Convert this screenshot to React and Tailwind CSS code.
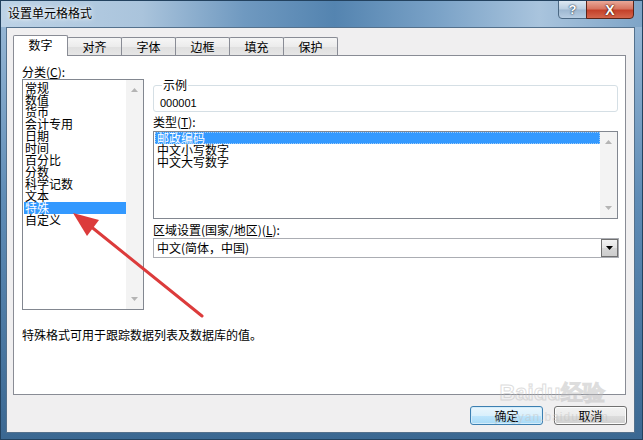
import React from 'react';

const categories = ['常规', '数值', '货币', '会计专用', '日期', '时间', '百分比', '分数', '科学记数', '文本', '特殊', '自定义'];
const types = ['邮政编码', '中文小写数字', '中文大写数字'];
const tabs = ['对齐', '字体', '边框', '填充', '保护'];

const ScrollBar = () => (
  <div className="w-[17px] shrink-0 flex flex-col justify-between items-center bg-[#f3f3f3] py-[8px]">
    <svg width="7" height="4" viewBox="0 0 7 4">
      <path d="M0 4 L3.5 0 L7 4Z" fill="#b4b4b4" />
    </svg>
    <svg width="7" height="4" viewBox="0 0 7 4">
      <path d="M0 0 L3.5 4 L7 0Z" fill="#b4b4b4" />
    </svg>
  </div>
);

export default function App() {
  return (
    <div className="relative w-[643px] h-[440px] overflow-hidden flex flex-col bg-[linear-gradient(180deg,#9dbcd9_0%,#5f8cb6_45%,#3b6892_100%)] border border-[#23425f] font-['Noto_Sans_CJK_SC',sans-serif] text-[12px] text-black">
      {/* Title bar */}
      <div className="h-[26px] shrink-0 flex justify-between bg-[linear-gradient(90deg,#bcd2e6_0%,#aac4dc_22%,#6f99c0_38%,#5484b0_52%,#7aa2c7_68%,#a9c4dd_84%,#7ea4c7_100%)]">
        <span className="pl-[7px] pt-[5px] leading-[14px] [text-shadow:0_0_6px_#ffffff,0_0_3px_#ffffff]">设置单元格格式</span>
        <div className="flex mr-[8px] h-[19px] -mt-px">
          <div className="w-[29px] flex items-center justify-center rounded-bl-[4px] border border-[#4b6883] bg-[linear-gradient(180deg,#dde8f2_0%,#b9cde0_48%,#9db7d0_52%,#b7cde2_100%)]">
            <span className="font-['Liberation_Sans',sans-serif] font-bold text-[13px] leading-none text-white [text-shadow:0_0_1px_#243a52,0_0_2px_#243a52]">?</span>
          </div>
          <div className="w-[48px] -ml-px flex items-center justify-center rounded-br-[4px] border border-[#5a2418] bg-[linear-gradient(180deg,#e9a898_0%,#d77561_45%,#c4412a_55%,#d4664c_100%)]">
            <span className="font-['Liberation_Sans',sans-serif] font-bold text-[14px] leading-none text-white [text-shadow:0_0_1px_#3b0e06,0_0_2px_#3b0e06]">X</span>
          </div>
        </div>
      </div>

      {/* Client area */}
      <div className="flex-1 ml-[5px] mr-[7px] mb-[6px] flex flex-col bg-[#f0eff0] border border-[#54718d] pt-[7px] pl-[6px] pr-[8px]">
        {/* Tabs */}
        <div className="h-[20px] flex items-end">
          <div className="relative z-10 w-[55px] h-[21px] -mb-px flex items-center justify-center bg-white border border-b-0 border-[#898c95] rounded-t-[2px] pb-[2px]">
            数字
          </div>
          {tabs.map((t) => (
            <div
              key={t}
              className="-ml-px w-[55px] h-[18px] flex items-center justify-center border border-b-0 border-[#898c95] rounded-t-[2px] bg-[linear-gradient(180deg,#f6f6f6_0%,#ececec_50%,#dfdfdf_51%,#e6e6e6_100%)]"
            >
              {t}
            </div>
          ))}
        </div>

        {/* Panel */}
        <div className="h-[340px] bg-white border border-[#898c95] flex flex-col pl-[8px] pr-[6px] pt-[10px]">
          <div className="flex gap-[9px]">
            {/* Category */}
            <div className="w-[122px] shrink-0 flex flex-col">
              <div className="h-[12px] leading-[12px]">
                分类(<u>C</u>):
              </div>
              <div className="mt-[1px] h-[231px] border border-[#828790] flex">
                <div className="flex-1 pt-[2px] pl-[1px]">
                  {categories.map((c) => (
                    <div
                      key={c}
                      className={`h-[12px] leading-[12px] pl-[1px] ${c === '特殊' ? 'bg-[#3399ff] text-white' : ''}`}
                    >
                      {c}
                    </div>
                  ))}
                </div>
                <ScrollBar />
              </div>
            </div>

            {/* Right column */}
            <div className="flex-1 flex flex-col">
              <fieldset className="mt-[13px] mr-[1px] border border-[#d5dfe5] rounded-[3px] pl-[6px] pt-[6px] pb-[2px]">
                <legend className="ml-[2px] px-[1px] leading-[12px]">示例</legend>
                <div className="leading-[12px] font-['Liberation_Sans',sans-serif] text-[11px]">000001</div>
              </fieldset>

              <div className="mt-[4px] h-[12px] leading-[12px]">
                类型(<u>T</u>):
              </div>
              <div className="mt-[3px] mr-[1px] h-[88px] border border-[#828790] flex">
                <div className="flex-1 pl-[1px]">
                  {types.map((t, i) => (
                    <div
                      key={t}
                      className={`h-[12px] leading-[12px] pl-[2px] ${i === 0 ? 'bg-[#3399ff] text-white outline outline-dotted outline-[#9ecbf7] -outline-offset-1' : ''}`}
                    >
                      {t}
                    </div>
                  ))}
                </div>
                <ScrollBar />
              </div>

              <div className="mt-[5px] h-[12px] leading-[12px]">
                区域设置(国家/地区)(<u>L</u>):
              </div>
              <div className="mt-[2px] h-[20px] border border-[#abadb3] flex items-center pl-[3px]">
                <span className="flex-1 leading-[12px]">中文(简体，中国)</span>
                <div className="w-[17px] h-[18px] border border-[#707070] flex items-center justify-center bg-[linear-gradient(180deg,#f2f2f2_0%,#e3e3e3_50%,#d6d6d6_51%,#cdcdcd_100%)]">
                  <svg width="7" height="4" viewBox="0 0 7 4">
                    <path d="M0 0 L3.5 4 L7 0Z" fill="#000" />
                  </svg>
                </div>
              </div>
            </div>
          </div>

          <p className="mt-[19px] h-[12px] leading-[12px]">特殊格式可用于跟踪数据列表及数据库的值。</p>
        </div>

        {/* Buttons */}
        <div className="mt-[11px] flex justify-end gap-[11px] -mr-[1px]">
          <button className="w-[73px] h-[19px] rounded-[3px] border border-[#3c7fb1] bg-[linear-gradient(180deg,#eaf6fd_0%,#d9f0fc_50%,#bee6fd_51%,#a7d9f5_100%)] leading-[12px] shadow-[inset_0_0_0_1px_#d4ecfa]">
            确定
          </button>
          <button className="w-[73px] h-[19px] rounded-[3px] border border-[#707070] bg-[linear-gradient(180deg,#f2f2f2_0%,#ebebeb_50%,#dddddd_51%,#cfcfcf_100%)] leading-[12px] shadow-[inset_0_0_0_1px_#fcfcfc]">
            取消
          </button>
        </div>
      </div>

      {/* Baidu watermark */}
      <div className="absolute left-[493px] top-[380px] w-[116px] flex flex-col items-center pointer-events-none opacity-50">
        <span className="font-['Liberation_Sans',sans-serif] text-[22px] leading-[24px] font-bold text-transparent [-webkit-text-stroke:1px_#bdbdbd]">
          Baidu经验
        </span>
        <span className="mt-[6px] font-['Liberation_Sans',sans-serif] text-[12px] leading-[12px] tracking-[1px] text-[#c4c4c4]">jingyan.baidu.com</span>
      </div>

      {/* Red annotation arrow */}
      <svg className="absolute left-0 top-0 pointer-events-none" width="643" height="440" viewBox="0 0 643 440">
        <line x1="201" y1="315" x2="88" y2="224" stroke="#dc3b3b" strokeWidth="3" strokeLinecap="round" />
        <path d="M72 212 L98 219 L86 235 Z" fill="#dc3b3b" />
      </svg>
    </div>
  );
}
